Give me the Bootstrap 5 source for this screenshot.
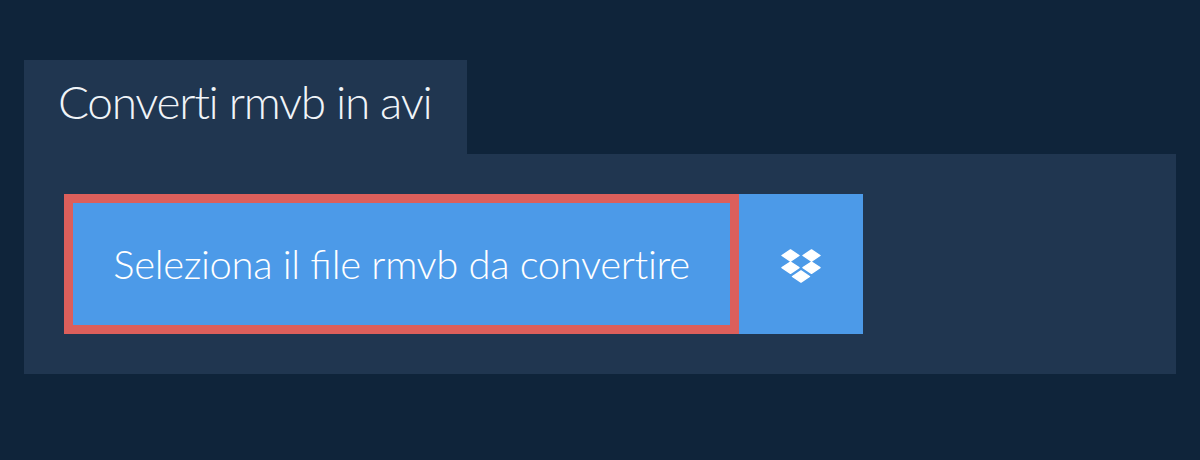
<!DOCTYPE html>
<html lang="it"><head><meta charset="utf-8"><title>Converti rmvb in avi</title>
<link rel="stylesheet" href="https://cdn.jsdelivr.net/npm/bootstrap@5.3.0/dist/css/bootstrap.min.css">
<style>
html,body{height:460px;overflow:hidden}
body{background:#0f243a;font-family:Lato,"Liberation Sans",sans-serif;color:#fff;padding:60px 24px 0;font-variant-ligatures:none}
.tabhead{background:#203650;height:94px;width:443px;font-size:46px;font-weight:300;padding:0 34px;line-height:84px;color:#f0f4f8;white-space:nowrap;margin:0;letter-spacing:-1.3px}
.panelbox{background:#203650;height:220px;padding:40px}
.pickbtn{background:#4c9ae8;border:9px solid #dc5f5b;border-radius:0;color:#fff;width:675px;height:140px;font-size:40px;font-weight:300;padding:0;white-space:nowrap;letter-spacing:-.35px}
.ligjoin{font-variant-ligatures:common-ligatures;letter-spacing:0}
.dropbtn{background:#4c9ae8;border:0;border-radius:0;width:124px;height:140px;padding:4px 0 0}
</style></head><body>
<h1 class="tabhead">Converti rmvb in avi</h1>
<div class="panelbox d-flex">
<button class="btn pickbtn" type="button">Seleziona il <span class="ligjoin">fi</span>le rmvb da convertire</button>
<button class="btn dropbtn d-flex align-items-center justify-content-center" type="button" aria-label="Dropbox">
<svg width="40" height="34" viewBox="0 0 40 34"><path fill="#fff" stroke="#fff" stroke-width="1.4" stroke-linejoin="round" d="M9.5 .9 1 6.5l8.5 5.6 8.5-5.6zM30.5 .9 22 6.5l8.5 5.6 8.5-5.6zM9.5 13.1 1 18.7l8.5 5.6 8.5-5.6zM30.5 13.1 22 18.7l8.5 5.6 8.5-5.6zM20 21.9 11.5 27.5 20 33.1l8.5-5.6z"/></svg>
</button>
</div>
<script src="https://cdn.jsdelivr.net/npm/bootstrap@5.3.0/dist/js/bootstrap.bundle.min.js"></script>
</body></html>
